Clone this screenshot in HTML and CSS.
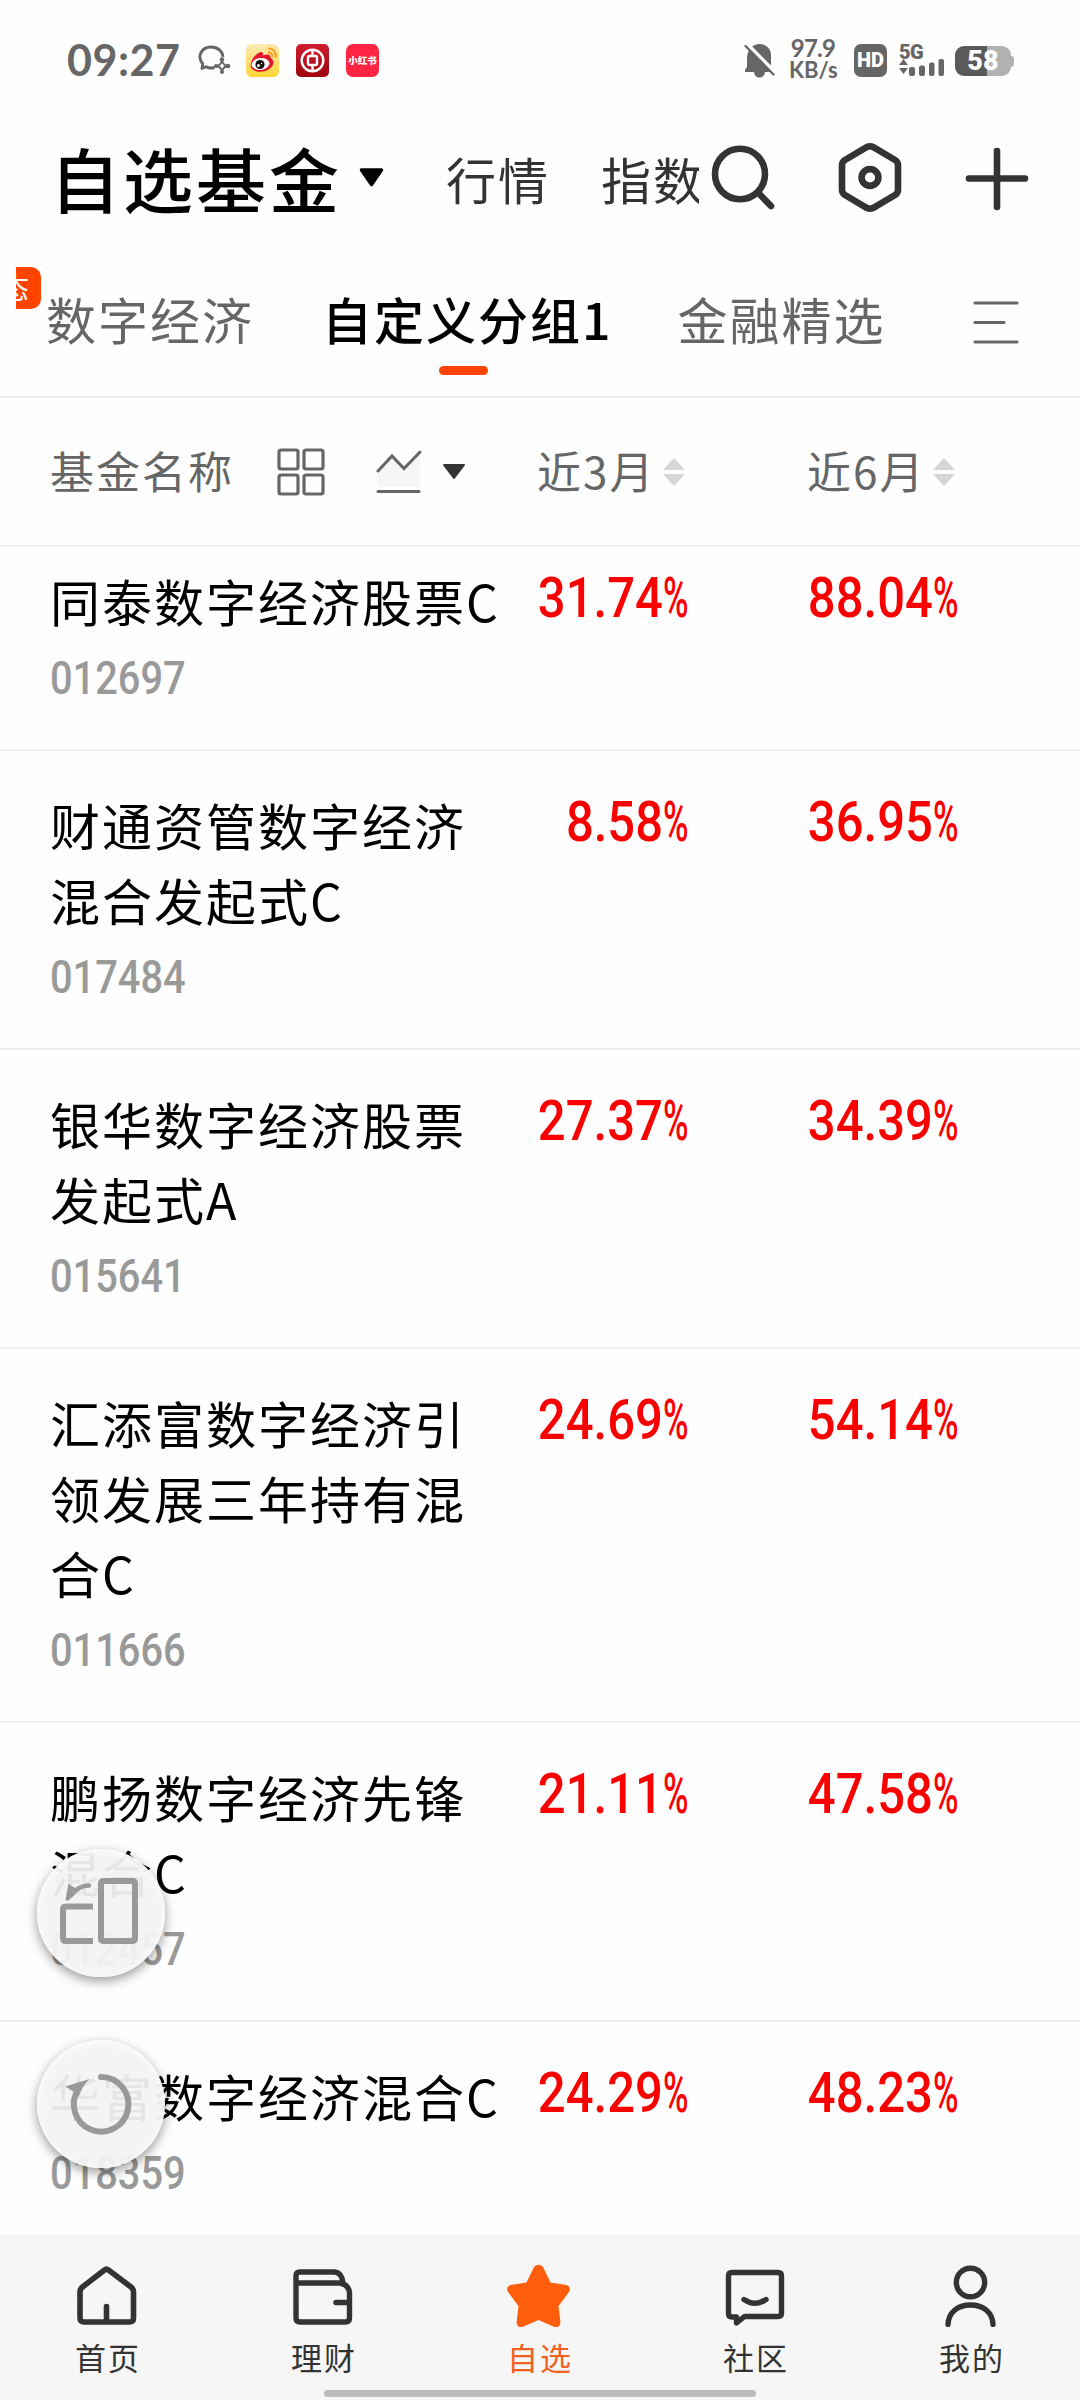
FILE: index.html
```html
<!DOCTYPE html>
<html lang="zh-CN">

<head>
    <meta charset="UTF-8">
    <meta name="viewport" content="width=device-width, initial-scale=1.0">
    <title>自选基金</title>
    <link rel="stylesheet" href="styles.css">
</head>

<body>
    <div class="app">
        <!-- Status bar -->
        <div class="status">
            <div class="status-left">
                <span class="time">09:27</span>
                <svg class="chat" width="34" height="30" viewBox="0 0 34 30" fill="none" stroke="#666" stroke-width="2.9">
                    <path d="M17.500 22.500c-3 .9-6 .6-8.500-.8L5 23.500l.8-4.500C-.8 11 5 2 14 2c7 0 11.500 4.500 12 10" stroke-linejoin="round"/>
                    <path d="M25 15.500q1 4.500 5.500 5.500-4.500 1-5.500 5.500-1-4.500-5.500-5.500 4.500-1 5.500-5.500z" stroke-width="1.800"/>
                    <circle cx="25" cy="14.500" r="2.200" fill="#666" stroke="none"/>
                    <circle cx="31" cy="21" r="2.300" fill="#666" stroke="none"/>
                    <circle cx="25" cy="27" r="2" fill="#666" stroke="none"/>
                    <circle cx="19" cy="21" r="2" fill="#666" stroke="none"/>
                </svg>
                <svg class="app-icon" width="33" height="33" viewBox="0 0 33 33">
                    <defs>
                        <linearGradient id="wb" x1="0" y1="0" x2="0" y2="1">
                            <stop offset="0" stop-color="#fdebb5"/>
                            <stop offset="1" stop-color="#ffd535"/>
                        </linearGradient>
                    </defs>
                    <rect width="33" height="33" rx="6" fill="url(#wb)"/>
                    <path d="M5 19c1-5 6-10 9.500-11 2-.4 3 1 2.500 3.500 4-1.500 8-1.500 7.500 2.500 4 1.500 4 7-.5 10.500-5 4-14 4.500-18 .5-1.500-1.500-1.600-3.500-1-6z" fill="#e6162d"/>
                    <ellipse cx="14.500" cy="20" rx="9" ry="6" fill="#fff" transform="rotate(-8 14.500 20)"/>
                    <circle cx="14" cy="20.500" r="4.600" fill="#111"/>
                    <circle cx="12.500" cy="21.500" r="1.500" fill="#fff"/>
                    <circle cx="15.500" cy="19.500" r=".7" fill="#fff"/>
                    <path d="M22 4.500c5-.8 9 4 7.500 9M22 8.500c3-.4 5 1.500 4.200 4.500" fill="none" stroke="#f8a020" stroke-width="2"/>
                </svg>
                <svg class="app-icon" width="33" height="33" viewBox="0 0 33 33">
                    <defs>
                        <linearGradient id="boc" x1="0" y1="0" x2="0" y2="1">
                            <stop offset="0" stop-color="#d0202e"/>
                            <stop offset="1" stop-color="#9c0410"/>
                        </linearGradient>
                    </defs>
                    <rect width="33" height="33" rx="5" fill="url(#boc)"/>
                    <g fill="none" stroke="#fff" stroke-width="2.400">
                        <circle cx="16.500" cy="16.500" r="10.800"/>
                        <rect x="12" y="12" width="9" height="9" rx="1.500"/>
                        <path d="M16.500 6v6M16.500 21v6"/>
                    </g>
                </svg>
                <span class="xhs">小红书</span>
            </div>
            <div class="status-right">
                <svg class="bell" width="31" height="35" viewBox="0 0 31 35">
                    <path d="M1 29v-2l2-3V14C4 6 9 1 15.500 1S27 6 27 12v13l1.500 4h-7.500a5.500 5.500 0 0 1-11 0z" fill="#666"/>
                    <path d="M2.500 .5l30 30.500" stroke="#fefefe" stroke-width="4"/>
                    <path d="M1.500 3l28 28.500" stroke="#666" stroke-width="2.400" stroke-linecap="round"/>
                </svg>
                <div class="speed"><span>97.9</span><span>KB/s</span></div>
                <span class="hd">HD</span>
                <div class="signal">
                    <span>5G</span>
                    <svg width="46" height="18" viewBox="0 0 46 18" fill="#666">
                        <path d="M0 6l4.500-6L9 6zM0 9h9l-4.500 6z"/>
                        <rect x="10" y="8" width="6" height="9" rx="2"/>
                        <rect x="20" y="6.500" width="6" height="10.500" rx="2"/>
                        <rect x="30" y="3.500" width="5.500" height="13.500" rx="2"/>
                        <rect x="39.500" y="0" width="5.500" height="17" rx="2"/>
                    </svg>
                </div>
                <div class="battery">58</div>
            </div>
        </div>

        <!-- Page header -->
        <div class="header">
            <h1 class="title">自选基金</h1>
            <svg class="title-arrow" width="25" height="19" viewBox="0 0 25 19">
                <path d="M2.500 2h20L12.500 16.500z" stroke="#000" stroke-width="3.500" stroke-linejoin="round"/>
            </svg>
            <div class="header-links">
                <span>行情</span>
                <span>指数</span>
            </div>
            <div class="header-icons">
                <svg width="64" height="72" viewBox="0 0 64 72" fill="none" stroke="#333" stroke-width="6.600">
                    <ellipse cx="29" cy="32" rx="25" ry="25.300"/>
                    <path d="M47.500 51L60 64" stroke-linecap="round"/>
                </svg>
                <svg width="64" height="72" viewBox="0 0 64 72" fill="none" stroke="#333" stroke-width="6.600">
                    <path d="M29 5q3-1.500 6 0l22 13q3 2 3 5v25q0 3-3 5l-22 13q-3 1.500-6 0l-22-13q-3-2-3-5v-25q0-3 3-5z"/>
                    <circle cx="32" cy="35.500" r="8.400"/>
                </svg>
                <svg width="64" height="72" viewBox="0 0 64 72" fill="none" stroke="#333" stroke-width="6.600" stroke-linecap="round">
                    <path d="M4 36.500h56M32 9v56"/>
                </svg>
            </div>
        </div>

        <!-- Group tabs -->
        <div class="tabs">
            <div class="badge"><span>动态</span></div>
            <span class="tab">数字经济</span>
            <span class="tab active">自定义分组1</span>
            <span class="tab">金融精选</span>
            <svg class="menu" width="46" height="46" viewBox="0 0 46 46" stroke="#666" stroke-width="3.200" stroke-linecap="round">
                <path d="M2 3h42M2 22.500h29M2 42h42"/>
            </svg>
        </div>

        <!-- Table head -->
        <div class="row-head">
            <div class="col-name">
                <span>基金名称</span>
                <svg class="grid-icon" width="48" height="48" viewBox="0 0 48 48" fill="none" stroke="#666" stroke-width="3.200">
                    <rect x="2" y="2" width="19" height="19" rx="2"/>
                    <rect x="27" y="2" width="19" height="19" rx="2"/>
                    <rect x="2" y="27" width="19" height="19" rx="2"/>
                    <rect x="27" y="27" width="19" height="19" rx="2"/>
                </svg>
                <svg class="chart-icon" width="46" height="44" viewBox="0 0 46 44" fill="none" stroke="#666" stroke-width="3">
                    <path d="M2 22L16 7l12 12L44 3v34H2z" fill="#f6f6f6" stroke="none"/>
                    <path d="M2 21L16 6l12 12.500L44 2" stroke-linecap="round"/>
                    <path d="M2 41.500h41" stroke-linecap="round"/>
                </svg>
                <svg width="24" height="17" viewBox="0 0 24 17"><path d="M2 2h20L12 15z" fill="#333" stroke="#333" stroke-width="2" stroke-linejoin="round"/></svg>
            </div>
            <div class="col-head">
                <span>近3月</span>
                <svg width="22" height="28" viewBox="0 0 22 28" fill="#d6d6d6"><path d="M0 12L11 0l11 12zM0 16h22L11 28z"/></svg>
            </div>
            <div class="col-head">
                <span>近6月</span>
                <svg width="22" height="28" viewBox="0 0 22 28" fill="#d6d6d6"><path d="M0 12L11 0l11 12zM0 16h22L11 28z"/></svg>
            </div>
        </div>

        <!-- Fund list -->
        <div class="list">
            <div class="fund">
                <div class="info"><p class="name">同泰数字经济股票C</p><p class="code">012697</p></div>
                <div class="rate"><b>31.74</b><i>%</i></div>
                <div class="rate"><b>88.04</b><i>%</i></div>
            </div>
            <div class="fund">
                <div class="info"><p class="name">财通资管数字经济混合发起式C</p><p class="code">017484</p></div>
                <div class="rate"><b>8.58</b><i>%</i></div>
                <div class="rate"><b>36.95</b><i>%</i></div>
            </div>
            <div class="fund">
                <div class="info"><p class="name">银华数字经济股票发起式A</p><p class="code">015641</p></div>
                <div class="rate"><b>27.37</b><i>%</i></div>
                <div class="rate"><b>34.39</b><i>%</i></div>
            </div>
            <div class="fund">
                <div class="info"><p class="name">汇添富数字经济引领发展三年持有混合C</p><p class="code">011666</p></div>
                <div class="rate"><b>24.69</b><i>%</i></div>
                <div class="rate"><b>54.14</b><i>%</i></div>
            </div>
            <div class="fund">
                <div class="info"><p class="name">鹏扬数字经济先锋混合C</p><p class="code">012457</p></div>
                <div class="rate"><b>21.11</b><i>%</i></div>
                <div class="rate"><b>47.58</b><i>%</i></div>
            </div>
            <div class="fund">
                <div class="info"><p class="name">华富数字经济混合C</p><p class="code">018359</p></div>
                <div class="rate"><b>24.29</b><i>%</i></div>
                <div class="rate"><b>48.23</b><i>%</i></div>
            </div>
        </div>

        <!-- Bottom navigation -->
        <div class="nav">
            <div class="nav-item">
                <svg width="64" height="64" viewBox="0 0 64 64" fill="none" stroke="#333" stroke-width="5.600" stroke-linecap="round">
                    <path d="M29.500 7q2-1.600 4 0L56 24q2.500 2 2.500 5v26q0 4-4 4H9q-4 0-4-4V29q0-3 2.500-5zM31.500 43.500v14"/>
                </svg>
                <span>首页</span>
            </div>
            <div class="nav-item">
                <svg width="64" height="64" viewBox="0 0 64 64" fill="none" stroke="#333" stroke-width="5.400" stroke-linecap="round">
                    <path d="M5 20v-7q0-4 4-4h35q7 1 8 11M5 20h44q9 2 9.500 10v25q0 4-4 4H9q-4 0-4-4zM45 39.500h13M5 18v10"/>
                </svg>
                <span>理财</span>
            </div>
            <div class="nav-item active">
                <svg width="64" height="64" viewBox="0 0 64 64" fill="#ff5e0c">
                    <path d="M27 4q4.500-4.500 9 0l7.500 15.500 16 2.500q5 2 2.500 7L51.500 43l2 17q-1 5-6 4l-16-7-16 7q-5 1-6-4l2-17L1 29q-2.500-5 2.500-7l16-2.500z"/>
                </svg>
                <span>自选</span>
            </div>
            <div class="nav-item">
                <svg width="64" height="64" viewBox="0 0 64 64" fill="none" stroke="#333" stroke-width="5.400" stroke-linecap="round" stroke-linejoin="round">
                    <path d="M9 9.500h46q3.500 0 3.500 3.500v37q0 3.500-3.500 3.500H21.500L13.500 60v-6H9q-3.500 0-3.500-3.500V13q0-3.500 3.500-3.500z"/>
                    <path d="M21 36.500q11 7.500 22 0"/>
                </svg>
                <span>社区</span>
            </div>
            <div class="nav-item">
                <svg width="64" height="64" viewBox="0 0 64 64" fill="none" stroke="#333" stroke-width="5.400" stroke-linecap="round">
                    <ellipse cx="31.500" cy="19.500" rx="14.200" ry="14.300"/>
                    <path d="M9 61.500C9.500 49.500 18.500 42 31.500 42S53.500 49.500 54 61.500"/>
                </svg>
                <span>我的</span>
            </div>
            <div class="home-bar"></div>
        </div>

        <!-- Floating buttons -->
        <div class="float float-rotate">
            <svg width="128" height="128" viewBox="0 0 128 128" fill="none" stroke="#999" stroke-width="6">
                <rect x="64" y="32" width="34" height="60" rx="2"/>
                <path d="M56 57.500H29q-3 0-3 3v28.500q0 3 3 3h27"/>
                <path d="M52 36.500q-11 0-18 10" stroke-width="4.500" stroke-linecap="round"/>
                <path d="M31.500 34.500l3 2.500 7.500 3.500-7.500 8-3.500 3.500-2.500-1z" fill="#999" stroke="none"/>
            </svg>
        </div>
        <div class="float float-back">
            <svg width="128" height="128" viewBox="0 0 128 128" fill="none" stroke="#999" stroke-width="6">
                <path d="M64 37A27.300 27.300 0 1 1 41.500 49" stroke-linecap="round"/>
                <path d="M28 46.500L52.500 39q-8 8-11 18-4-6-13.500-10.500z" fill="#999" stroke="none"/>
            </svg>
        </div>
    </div>
</body>

</html>
```
FILE: styles.css
```css
* {
    box-sizing: border-box;
}

body {
    margin: 0;
    font-family: "Noto Sans CJK SC", sans-serif;
    background: #fefefe;
    color: #000;
}

h1, p {
    margin: 0;
}

svg {
    display: block;
    flex-shrink: 0;
}

.app {
    position: relative;
    display: flex;
    flex-direction: column;
    width: 1080px;
    height: 2400px;
    overflow: hidden;
}

/* status bar */
.status {
    display: flex;
    justify-content: space-between;
    height: 118px;
    padding: 2px 66px 0 67px;
    color: #666;
    font-family: Lato, sans-serif;
    font-weight: bold;
}

.status-left, .status-right {
    display: flex;
    align-items: center;
    height: 116px;
}

.time {
    width: 130px;
    margin-top: -2px;
    font-size: 43px;
    letter-spacing: 0.5px;
}

.chat {
    margin-right: 15px;
}

.app-icon {
    margin-right: 17px;
}

.xhs {
    width: 33px;
    height: 33px;
    border-radius: 7px;
    background: #ff2442;
    color: #fff;
    font: 900 9.5px/33px "Noto Sans CJK SC", sans-serif;
    text-align: center;
    white-space: nowrap;
}

.speed {
    display: flex;
    flex-direction: column;
    width: 48px;
    margin: -2px 17px 0 14px;
    font-size: 22px;
    line-height: 22px;
    text-align: center;
}

.speed span:first-child {
    font-size: 24px;
    letter-spacing: -0.8px;
}

.hd {
    width: 33px;
    height: 33px;
    border-radius: 7px;
    background: #666;
    color: #fff;
    font: 900 20px/33px Roboto, sans-serif;
    text-align: center;
}

.signal {
    width: 46px;
    height: 33px;
    margin: 0 10px 0 12px;
    font: 900 20px/17px Roboto, sans-serif;
}

.signal span {
    display: block;
    height: 15px;
    letter-spacing: -0.5px;
}

.battery {
    position: relative;
    width: 56px;
    height: 30px;
    margin: 2px 3px 0 0;
    border-radius: 9px;
    background: linear-gradient(90deg, #5a5a5a 58%, #b2b2b2 58%);
    color: #fff;
    font: 900 27px/31px Roboto, sans-serif;
    text-align: center;
}

.battery::after {
    content: "";
    position: absolute;
    left: 55px;
    top: 10px;
    width: 4px;
    height: 11px;
    border-radius: 0 3px 3px 0;
    background: #b2b2b2;
}

/* page header */
.header {
    display: flex;
    align-items: center;
    height: 124px;
    padding-left: 50px;
}

.title {
    width: 309px;
    margin-top: -4px;
    font-size: 70px;
    font-weight: 500;
    line-height: 100px;
    letter-spacing: 3px;
    white-space: nowrap;
}

.title-arrow {
    margin-top: -6px;
}

.header-links {
    display: flex;
    gap: 51px;
    width: 253px;
    margin: -4px 0 0 62px;
    overflow: hidden;
    color: #333;
    font-size: 50px;
    letter-spacing: 2px;
    line-height: 75px;
    white-space: nowrap;
}

.header-icons {
    display: flex;
    gap: 63px;
    margin: -5px 0 0 12px;
}

/* group tabs */
.tabs {
    display: flex;
    height: 156px;
    padding: 39px 0 0 16px;
    border-bottom: 2px solid #eee;
    font-size: 50px;
    letter-spacing: 2px;
    line-height: 75px;
}

.badge {
    display: flex;
    justify-content: flex-end;
    width: 25px;
    height: 42px;
    margin: -14px 5px 0 0;
    padding-right: 12px;
    border-radius: 0 10px 10px 0;
    background: #ff4400;
    overflow: hidden;
    color: #fff;
    font-size: 28px;
    letter-spacing: 0;
    line-height: 41px;
    white-space: nowrap;
}

.badge span {
    flex-shrink: 0;
}

.tab {
    position: relative;
    margin-right: 68px;
    color: #666;
}

.active.tab {
    margin-right: 65px;
    color: #000;
    font-weight: 500;
}

.active.tab::after {
    content: "";
    position: absolute;
    left: 117px;
    top: 85px;
    width: 49px;
    height: 9px;
    border-radius: 5px;
    background: #ff4400;
}

.menu {
    margin: 19px 0 0 19px;
}

/* table head */
.row-head {
    display: flex;
    height: 149px;
    padding-left: 50px;
    border-bottom: 2px solid #eee;
    color: #666;
    font-size: 44px;
    letter-spacing: 2px;
}

.col-name {
    display: flex;
    align-items: center;
    width: 487px;
}

.row-head span {
    margin-top: -4px;
}

.grid-icon {
    margin-left: 43px;
}

.chart-icon {
    margin: 0 20px 0 51px;
}

.col-head {
    display: flex;
    align-items: center;
    gap: 8px;
    width: 270px;
}

/* fund list, scrolled a little past the first row */
.list {
    height: 1688px;
    overflow: hidden;
}

.fund {
    display: flex;
    padding: 40px 0 34px 50px;
    border-bottom: 2px solid #eee;
}

.fund:first-child {
    margin-top: -20px;
}

.info {
    width: 487px;
    margin-top: -4px;
    padding-right: 30px;
}

.name {
    font-size: 50px;
    letter-spacing: 2px;
    line-height: 75px;
}

.code {
    padding-top: 4px;
    color: #999;
    font: 500 46px/73px Roboto, sans-serif;
    transform: scaleX(0.865);
    transform-origin: left;
}

.rate {
    display: flex;
    justify-content: flex-end;
    width: 153px;
    height: 64px;
    margin: -1px 117px 0 0;
    color: #fa0000;
    font: 500 56px/64px Roboto, sans-serif;
}

.rate b {
    font-weight: 500;
    transform: scaleX(0.875);
    transform-origin: right;
}

.rate i {
    width: 27px;
    font-style: normal;
    font-weight: 500;
    transform: scaleX(0.62);
    transform-origin: left;
}

/* bottom navigation */
.nav {
    position: relative;
    display: flex;
    flex: 1;
    padding-top: 28px;
    background: #f6f6f6;
}

.nav-item {
    display: flex;
    flex-direction: column;
    align-items: center;
    width: 216px;
    color: #333;
    font-size: 31px;
    letter-spacing: 2px;
    line-height: 59px;
}

.nav-item svg {
    margin-left: -2px;
}

.nav-item.active {
    color: #f0601e;
}

.home-bar {
    position: absolute;
    left: 324px;
    bottom: 3px;
    width: 432px;
    height: 7px;
    border-radius: 4px;
    background: #bbb;
}

/* floating buttons */
.float {
    position: absolute;
    left: 37px;
    width: 128px;
    height: 128px;
    border-radius: 50%;
    background: rgba(243, 243, 243, 0.94);
    box-shadow: 0 4px 12px rgba(0, 0, 0, 0.4), inset 0 2px 8px rgba(255, 255, 255, 0.9);
}

.float-rotate {
    top: 1849px;
}

.float-back {
    top: 2040px;
}
```
